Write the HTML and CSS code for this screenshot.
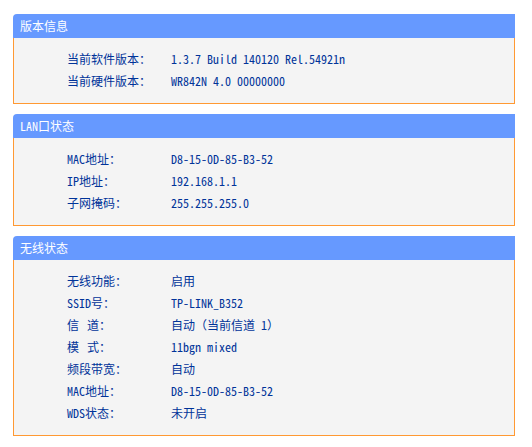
FILE: index.html
```html
<!DOCTYPE html>
<html lang="zh-CN">
<head>
  <meta charset="UTF-8">
  <title>运行状态</title>
  <link rel="stylesheet" href="styles.css">
</head>
<body>
  <div class="panel">
    <div class="panel-title">版本信息</div>
    <div class="panel-body">
      <div class="row"><span class="label">当前软件版本：</span><span class="value">1.3.7 Build 140120 Rel.54921n</span></div>
      <div class="row"><span class="label">当前硬件版本：</span><span class="value">WR842N 4.0 00000000</span></div>
    </div>
  </div>
  <div class="panel">
    <div class="panel-title">LAN口状态</div>
    <div class="panel-body">
      <div class="row"><span class="label">MAC地址：</span><span class="value">D8-15-0D-85-B3-52</span></div>
      <div class="row"><span class="label">IP地址：</span><span class="value">192.168.1.1</span></div>
      <div class="row"><span class="label">子网掩码：</span><span class="value">255.255.255.0</span></div>
    </div>
  </div>
  <div class="panel">
    <div class="panel-title">无线状态</div>
    <div class="panel-body">
      <div class="row"><span class="label">无线功能：</span><span class="value">启用</span></div>
      <div class="row"><span class="label">SSID号：</span><span class="value">TP-LINK_B352</span></div>
      <div class="row"><span class="label">信<span class="gap"></span>道：</span><span class="value">自动（当前信道 1）</span></div>
      <div class="row"><span class="label">模<span class="gap"></span>式：</span><span class="value">11bgn mixed</span></div>
      <div class="row"><span class="label">频段带宽：</span><span class="value">自动</span></div>
      <div class="row"><span class="label">MAC地址：</span><span class="value">D8-15-0D-85-B3-52</span></div>
      <div class="row"><span class="label">WDS状态：</span><span class="value">未开启</span></div>
    </div>
  </div>
</body>
</html>
```

FILE: styles.css
```css
body {
  margin: 0;
  padding: 14px 17px 0 13px;
  background-color: #fff;
  font-family: "Noto Sans Mono CJK SC", "Liberation Mono", "Noto Sans CJK SC", monospace;
  font-size: 12px;
  color: #003399;
}
.panel {
  width: 502px;
  margin-bottom: 10px;
}
.panel-title {
  height: 24px;
  line-height: 24px;
  padding-left: 7px;
  background-color: #6699ff;
  border-top-left-radius: 4px;
  color: #fff;
}
.panel-body {
  background-color: #f4f4f4;
  border: 1px solid #ff9933;
  border-top: none;
  padding: 10px 0 11px 53px;
}
.row {
  display: flex;
  height: 22px;
  line-height: 22px;
}
.label {
  width: 104px;
}
/* wide space between the two characters of short labels */
.gap {
  display: inline-block;
  width: 8px;
}
```
